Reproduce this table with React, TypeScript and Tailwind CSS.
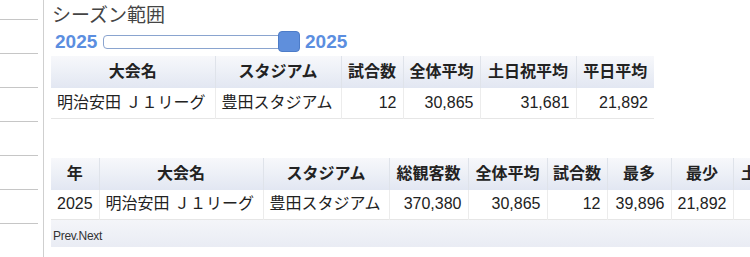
const jp = "font-['Liberation_Sans','Noto_Sans_CJK_JP',sans-serif]"

const head1 = [
    { label: '大会名', w: 'w-[164px]' },
    { label: 'スタジアム', w: 'w-[126px]' },
    { label: '試合数', w: 'w-[62px]' },
    { label: '全体平均', w: 'w-[77px]' },
    { label: '土日祝平均', w: 'w-[96px]' },
    { label: '平日平均', w: 'w-[78px]' },
]
const row1 = [
    { v: '明治安田 Ｊ１リーグ', num: false },
    { v: '豊田スタジアム', num: false },
    { v: '12', num: true },
    { v: '30,865', num: true },
    { v: '31,681', num: true },
    { v: '21,892', num: true },
]

const head2 = [
    { label: '年', w: 'w-[48px]' },
    { label: '大会名', w: 'w-[164px]' },
    { label: 'スタジアム', w: 'w-[126px]' },
    { label: '総観客数', w: 'w-[79px]' },
    { label: '全体平均', w: 'w-[79px]' },
    { label: '試合数', w: 'w-[60px]' },
    { label: '最多', w: 'w-[64px]' },
    { label: '最少', w: 'w-[62px]' },
    { label: '土日祝平均', w: 'w-[96px]' },
    { label: '平日平均', w: 'w-[78px]' },
]
const row2 = [
    { v: '2025', num: true },
    { v: '明治安田 Ｊ１リーグ', num: false },
    { v: '豊田スタジアム', num: false },
    { v: '370,380', num: true },
    { v: '30,865', num: true },
    { v: '12', num: true },
    { v: '39,896', num: true },
    { v: '21,892', num: true },
    { v: '31,681', num: true },
    { v: '21,892', num: true },
]

type Head = { label: string, w: string }
type Cell = { v: string, num: boolean }

function DataTable ({ head, row, width }: { head: Head[], row: Cell[], width: string }) {
    return (
        <table className={`${width} border-collapse table-fixed text-[16px] text-[#222]`}>
            <colgroup>
                {head.map((h) => (
                    <col key={h.label} className={h.w} />
                ))}
            </colgroup>
            <thead>
                <tr className="bg-gradient-to-b from-[#f7f8fb] to-[#e2e7f2]">
                    {head.map((h) => (
                        <th key={h.label} className="h-[32px] p-0 text-center font-bold border-r border-[#dfe3ea] last:border-r-0 whitespace-nowrap overflow-hidden">
                            {h.label}
                        </th>
                    ))}
                </tr>
            </thead>
            <tbody>
                <tr className="bg-white border-b border-[#e6e6e6]">
                    {row.map((c, i) => (
                        <td key={i} className={`h-[30px] px-[6px] whitespace-nowrap overflow-hidden border-r border-[#ececec] last:border-r-0 ${c.num ? 'text-right' : 'text-left'}`}>
                            {c.v}
                        </td>
                    ))}
                </tr>
            </tbody>
        </table>
    )
}

export default function App () {
    return (
        <div className={`flex w-[750px] h-[257px] bg-white overflow-hidden ${jp}`}>
            <aside className="w-[44px] h-full border-r border-[#cfcfcf] shrink-0">
                <div className="w-[38px] h-[20px] border-b border-[#c6c6c6]" />
                {[0, 1, 2, 3, 4, 5].map((i) => (
                    <div key={i} className="w-[38px] h-[34px] border-b border-[#c6c6c6]" />
                ))}
            </aside>
            <main className="flex-1 min-w-0 pl-[7px] overflow-hidden">
                <h2 className="h-[30px] pt-[3px] pl-[1px] text-[19px] leading-[26px] text-[#444]">シーズン範囲</h2>
                <div className="flex items-center h-[24px] pl-[4px]">
                    <span className="w-[45px] text-[19px] font-bold text-[#5b8ee0]">2025</span>
                    <div className="relative ml-[3px] w-[197px] h-[16px] flex items-center">
                        <div className="w-[186px] h-[14px] rounded-[4px] border border-[#8aa4cf] bg-white" />
                        <div className="absolute left-[175px] top-[-3px] w-[22px] h-[21px] rounded-[4px] bg-[#5f8fdc] border border-[#4d7cc8]" />
                    </div>
                    <span className="ml-[5px] text-[19px] font-bold text-[#5b8ee0]">2025</span>
                </div>
                <div className="mt-[2px]">
                    <DataTable head={head1} row={row1} width="w-[603px]" />
                </div>
                <div className="mt-[39px] w-[856px]">
                    <DataTable head={head2} row={row2} width="w-[856px]" />
                    <div className="h-[27px] flex items-center pt-[4px] pl-[2px] text-[12px] tracking-[-0.3px] text-[#333] bg-gradient-to-b from-[#f4f5f9] to-[#e9ecf4] font-['Liberation_Sans',sans-serif]">
                        Prev.Next
                    </div>
                </div>
            </main>
        </div>
    )
}
